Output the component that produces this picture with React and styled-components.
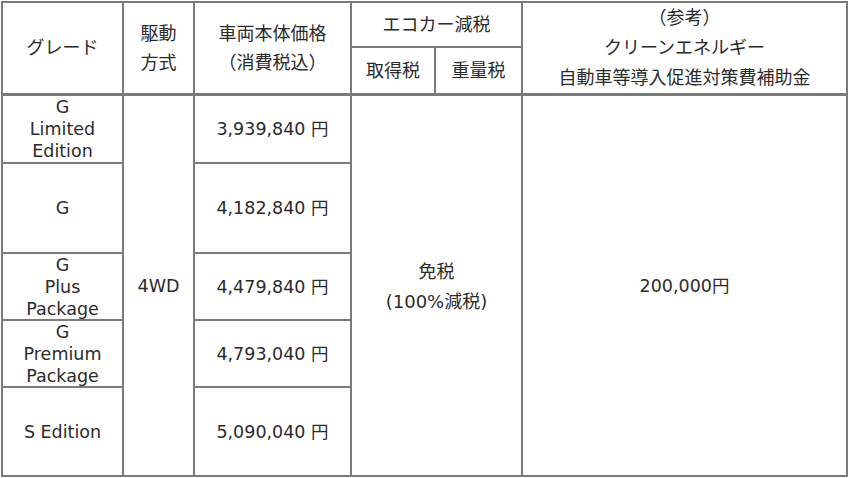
import React from "react";
import styled, { createGlobalStyle } from "styled-components";

const Global = createGlobalStyle`
  html, body { margin: 0; padding: 0; background: #fff; }
  body { font-family: "DejaVu Sans", "Noto Sans CJK JP", sans-serif; color: #2b2b2b; }
`;

const Grid = styled.div`
  display: grid;
  grid-template-columns: 119px 69px 155px 82px 85px 323px;
  grid-template-rows: 43px 46px 66px 88px 65px 65px 87px;
  gap: 2px;
  padding: 2px;
  margin: 1px 0 0 1px;
  width: max-content;
  background: #7b7b7b;
`;

const Cell = styled.div`
  background: #fff;
  display: flex;
  flex-direction: column;
  align-items: center;
  justify-content: center;
  text-align: center;
  font-size: ${(p) => (p.$latin ? "17.5px" : "18px")};
  line-height: ${(p) => p.$lh || 30}px;
  color: #2b2b2b;
  grid-column: ${(p) => p.$col};
  grid-row: ${(p) => p.$row};
  ${(p) => (p.$headBottom ? "border-bottom: 1px solid #7b7b7b;" : "")}
  ${(p) => (p.$offset ? `padding-top: ${p.$offset}px;` : "")}
`;

const Line = styled.span`
  display: block;
  white-space: nowrap;
`;

const grades = [
  { lines: ["G", "Limited", "Edition"], price: "3,939,840 円" },
  { lines: ["G"], price: "4,182,840 円" },
  { lines: ["G", "Plus", "Package"], price: "4,479,840 円" },
  { lines: ["G", "Premium", "Package"], price: "4,793,040 円" },
  { lines: ["S Edition"], price: "5,090,040 円" },
];

export default function App() {
  return (
    <>
      <Global />
      <Grid>
        <Cell $col="1" $row="1 / 3" $headBottom>
          <Line>グレード</Line>
        </Cell>
        <Cell $col="2" $row="1 / 3" $headBottom $lh={29}>
          <Line>駆動</Line>
          <Line>方式</Line>
        </Cell>
        <Cell $col="3" $row="1 / 3" $headBottom $lh={29}>
          <Line>車両本体価格</Line>
          <Line>（消費税込）</Line>
        </Cell>
        <Cell $col="4 / 6" $row="1">
          <Line>エコカー減税</Line>
        </Cell>
        <Cell $col="4" $row="2" $headBottom>
          <Line>取得税</Line>
        </Cell>
        <Cell $col="5" $row="2" $headBottom>
          <Line>重量税</Line>
        </Cell>
        <Cell $col="6" $row="1 / 3" $headBottom>
          <Line>（参考）</Line>
          <Line>クリーンエネルギー</Line>
          <Line>自動車等導入促進対策費補助金</Line>
        </Cell>

        {grades.map((g, i) => (
          <React.Fragment key={i}>
            <Cell $col="1" $row={`${i + 3}`} $latin $lh={22}>
              {g.lines.map((l, j) => (
                <Line key={j}>{l}</Line>
              ))}
            </Cell>
            <Cell $col="3" $row={`${i + 3}`} $latin>
              <Line>{g.price}</Line>
            </Cell>
          </React.Fragment>
        ))}

        <Cell $col="2" $row="3 / 8" $latin>
          <Line>4WD</Line>
        </Cell>
        <Cell $col="4 / 6" $row="3 / 8" $offset={3}>
          <Line>免税</Line>
          <Line>(100%減税)</Line>
        </Cell>
        <Cell $col="6" $row="3 / 8" $latin>
          <Line>200,000円</Line>
        </Cell>
      </Grid>
    </>
  );
}
